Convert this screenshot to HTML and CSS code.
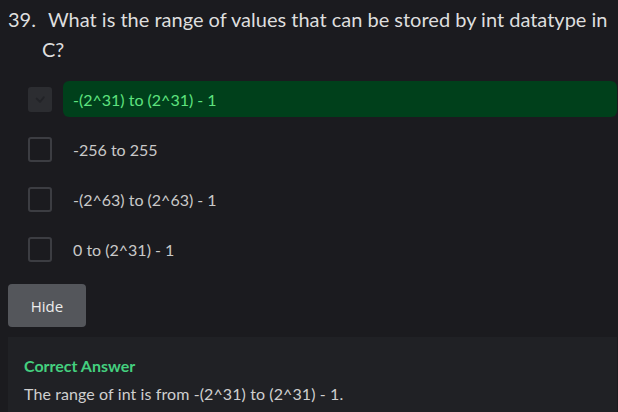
FILE: index.html
```html
<!DOCTYPE html>
<html>
<head>
<meta charset="utf-8">
<link rel="stylesheet" href="styles.css">
</head>
<body>
<div class="page">
  <h2 class="question"><span class="qnum">39.</span>What is the range of values that can be stored by int datatype in C?</h2>
  <ul class="options">
    <li class="option correct">
      <span class="box checked"><svg viewBox="0 0 24 24" width="24" height="24"><path d="M8 11.5 L12 15.5 L16.5 10" fill="none" stroke="#222327" stroke-width="2.2" stroke-linecap="round" stroke-linejoin="round"/></svg></span>
      <span class="label">-(2^31) to (2^31) - 1</span>
    </li>
    <li class="option">
      <span class="box"></span>
      <span class="label">-256 to 255</span>
    </li>
    <li class="option">
      <span class="box"></span>
      <span class="label">-(2^63) to (2^63) - 1</span>
    </li>
    <li class="option">
      <span class="box"></span>
      <span class="label">0 to (2^31) - 1</span>
    </li>
  </ul>
  <button class="hide-btn">Hide</button>
  <div class="answer">
    <div class="answer-title">Correct Answer</div>
    <p class="answer-text">The range of int is from -(2^31) to (2^31) - 1.</p>
  </div>
</div>
</body>
</html>
```
FILE: styles.css
```css
* { box-sizing: border-box; }
html, body {
  margin: 0;
  background: #1b1b1f;
  height: 100%;
  overflow: hidden;
}
body {
  font-family: Lato, "Noto Sans", sans-serif;
  color: #d6d6d6;
}
.page {
  padding: 4px 1px 0 8px;
}
.question {
  margin: 0;
  font-size: 20px;
  line-height: 30px;
  font-weight: 400;
  color: #dedede;
  padding-left: 34px;
  text-indent: -34px;
}
.qnum {
  display: inline-block;
  text-indent: 0;
  width: 40px;
}
.options {
  list-style: none;
  margin: 17px 0 0;
  padding: 0 0 0 20px;
  display: flex;
  flex-direction: column;
  gap: 14px;
}
.option {
  display: flex;
  align-items: center;
  gap: 11px;
  height: 36px;
}
.box {
  flex: none;
  width: 24px;
  height: 25px;
  border: 2px solid #3c3d42;
  border-radius: 3px;
  display: flex;
  align-items: center;
  justify-content: center;
}
.box.checked {
  background: #2c2d31;
  border-color: #2c2d31;
}
.box svg { display: block; }
.label {
  flex: 1;
  height: 36px;
  display: flex;
  align-items: center;
  padding-left: 10px;
  font-size: 16px;
  color: #c9c9c9;
  border-radius: 6px;
}
.correct .label {
  background: #00401b;
  color: #5ee37f;
}
.hide-btn {
  display: block;
  margin-top: 17px;
  width: 78px;
  height: 43px;
  border: none;
  border-radius: 4px;
  background: #54565b;
  color: #ececec;
  font-family: "Open Sans", "Noto Sans", sans-serif;
  font-size: 15px;
  padding: 0;
}
.answer {
  margin-top: 10px;
  background: #202125;
  padding: 17px 16px 0;
  height: 75px;
}
.answer-title {
  font-size: 16px;
  line-height: 24px;
  font-weight: 700;
  color: #44d07f;
}
.answer-text {
  margin: 4px 0 0;
  font-size: 16px;
  line-height: 24px;
  letter-spacing: 0.1px;
  color: #cfcfcf;
}
```
